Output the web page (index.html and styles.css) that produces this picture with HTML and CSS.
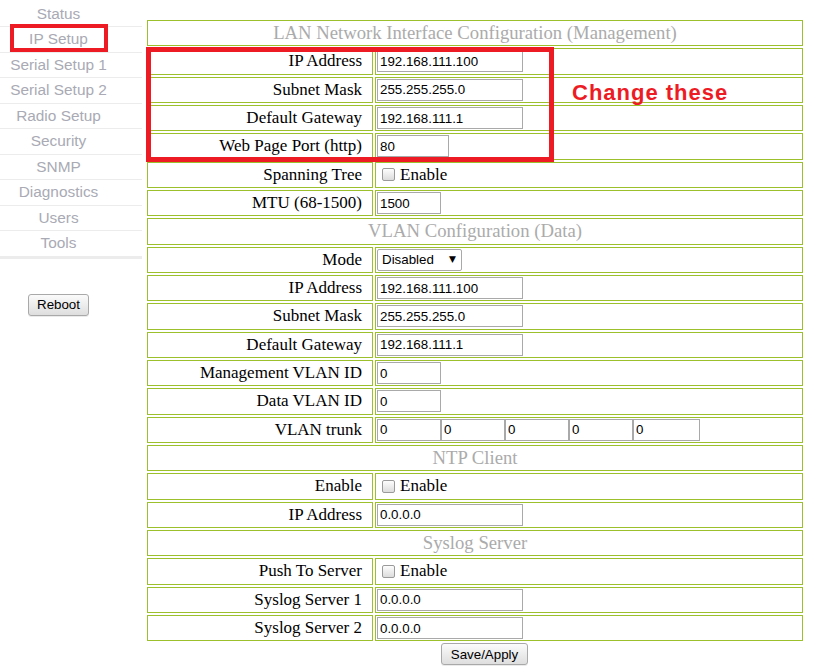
FILE: index.html
```html
<!DOCTYPE html>
<html>
<head>
<meta charset="utf-8">
<link rel="stylesheet" href="styles.css">
</head>
<body>
<div class="page">
  <aside class="sidebar">
    <ul class="nav">
      <li>Status</li>
      <li>IP Setup</li>
      <li>Serial Setup 1</li>
      <li>Serial Setup 2</li>
      <li>Radio Setup</li>
      <li>Security</li>
      <li>SNMP</li>
      <li>Diagnostics</li>
      <li>Users</li>
      <li class="last">Tools</li>
    </ul>
    <div class="reboot-wrap"><button class="btn">Reboot</button></div>
  </aside>
  <main class="main">
    <table class="cfg">
      <tr><td colspan="2" class="head">LAN Network Interface Configuration (Management)</td></tr>
      <tr><td class="lbl">IP Address</td><td class="val"><input class="txt w146" value="192.168.111.100"></td></tr>
      <tr><td class="lbl">Subnet Mask</td><td class="val"><input class="txt w146" value="255.255.255.0"></td></tr>
      <tr><td class="lbl">Default Gateway</td><td class="val"><input class="txt w146" value="192.168.111.1"></td></tr>
      <tr><td class="lbl">Web Page Port (http)</td><td class="val"><input class="txt w72" value="80"></td></tr>
      <tr><td class="lbl">Spanning Tree</td><td class="val"><label class="chk"><input type="checkbox" class="cb">Enable</label></td></tr>
      <tr><td class="lbl">MTU (68-1500)</td><td class="val"><input class="txt w64" value="1500"></td></tr>
      <tr><td colspan="2" class="head">VLAN Configuration (Data)</td></tr>
      <tr><td class="lbl">Mode</td><td class="val"><span class="sel"><select class="select"><option>Disabled</option></select></span></td></tr>
      <tr><td class="lbl">IP Address</td><td class="val"><input class="txt w146" value="192.168.111.100"></td></tr>
      <tr><td class="lbl">Subnet Mask</td><td class="val"><input class="txt w146" value="255.255.255.0"></td></tr>
      <tr><td class="lbl">Default Gateway</td><td class="val"><input class="txt w146" value="192.168.111.1"></td></tr>
      <tr><td class="lbl">Management VLAN ID</td><td class="val"><input class="txt w64" value="0"></td></tr>
      <tr><td class="lbl">Data VLAN ID</td><td class="val"><input class="txt w64" value="0"></td></tr>
      <tr><td class="lbl">VLAN trunk</td><td class="val"><div class="trunk"><input class="txt w64" value="0"><input class="txt w64" value="0"><input class="txt w64" value="0"><input class="txt w64" value="0"><input class="txt w67" value="0"></div></td></tr>
      <tr><td colspan="2" class="head">NTP Client</td></tr>
      <tr><td class="lbl">Enable</td><td class="val"><label class="chk"><input type="checkbox" class="cb">Enable</label></td></tr>
      <tr><td class="lbl">IP Address</td><td class="val"><input class="txt w146" value="0.0.0.0"></td></tr>
      <tr><td colspan="2" class="head">Syslog Server</td></tr>
      <tr><td class="lbl">Push To Server</td><td class="val"><label class="chk"><input type="checkbox" class="cb">Enable</label></td></tr>
      <tr><td class="lbl">Syslog Server 1</td><td class="val"><input class="txt w146" value="0.0.0.0"></td></tr>
      <tr><td class="lbl">Syslog Server 2</td><td class="val"><input class="txt w146" value="0.0.0.0"></td></tr>
    </table>
    <div class="save-row"><button class="btn save">Save/Apply</button></div>
  </main>
</div>
<div class="mark mark-nav"></div>
<div class="mark mark-fields"></div>
<div class="note">Change these</div>
</body>
</html>
```

FILE: styles.css
```css
html, body {
  margin: 0;
  padding: 0;
  background: #fff;
}
body {
  position: relative;
  width: 817px;
  height: 671px;
  overflow: hidden;
  font-family: "Liberation Serif", "Times New Roman", serif;
}
.page {
  display: flex;
  align-items: flex-start;
}
.sidebar {
  width: 142px;
  flex: none;
}
.nav {
  list-style: none;
  margin: 0;
  padding: 1.5px 0 0;
}
.nav li {
  font-family: "Liberation Sans", Arial, sans-serif;
  font-size: 15.4px;
  color: #a9aab4;
  line-height: 24.5px;
  height: 24.5px;
  border-bottom: 1px solid #ececec;
  text-align: center;
  padding-right: 25px;
}
.nav li.last {
  border-bottom: 3px solid #ececec;
}
.reboot-wrap {
  padding-top: 35px;
  padding-right: 25px;
  text-align: center;
}
.btn {
  font-family: "Liberation Sans", Arial, sans-serif;
  font-size: 13.33px;
  color: #000;
  height: 22px;
  padding: 0 7px;
  border: 1px solid #a9a9a9;
  border-radius: 3px;
  background: linear-gradient(#fbfbfb, #dedede);
  box-shadow: 0 1px 0 rgba(0,0,0,0.08);
}
.reboot-wrap .btn {
  width: 61px;
}
.main {
  margin-left: 3px;
  margin-top: 18px;
}
.cfg {
  border-collapse: separate;
  border-spacing: 2px;
  width: 660px;
}
.cfg td {
  border: 1px solid #9cbf2c;
  height: 24.33px;
  padding: 0;
  vertical-align: middle;
}
.cfg td.head {
  text-align: center;
  color: #ababab;
  font-size: 18.7px;
}
.cfg td.lbl {
  width: 214px;
  text-align: right;
  padding-right: 10px;
  font-size: 17px;
  color: #000;
  white-space: nowrap;
}
.cfg td.val {
  padding-left: 1px;
}
.txt {
  display: block;
  box-sizing: border-box;
  height: 22px;
  margin: 0;
  padding: 1px 2px;
  border: 1px solid #a9a9a9;
  font-family: "Liberation Sans", Arial, sans-serif;
  font-size: 13.33px;
  color: #000;
  background: #fff;
}
.w146 { width: 146px; }
.w72 { width: 72px; }
.w64 { width: 64px; }
.w67 { width: 67px; }
.trunk {
  display: flex;
}
.chk {
  display: flex;
  align-items: center;
  font-size: 17px;
  color: #000;
  padding-left: 5px;
}
.cb {
  appearance: none;
  -webkit-appearance: none;
  width: 13px;
  height: 13px;
  margin: 0 5px 0 0;
  border: 1px solid #9a9a9a;
  border-radius: 2px;
  background: linear-gradient(#fdfdfd, #dcdcdc);
}
.sel {
  position: relative;
  display: inline-block;
  vertical-align: middle;
}
.sel::after {
  content: "\25BC";
  position: absolute;
  right: 6px;
  top: 5px;
  font-size: 9px;
  font-family: "DejaVu Sans", sans-serif;
  color: #000;
  pointer-events: none;
}
.select {
  appearance: none;
  -webkit-appearance: none;
  display: block;
  width: 85px;
  height: 22px;
  margin: 0;
  padding: 0 0 0 4px;
  border: 1px solid #a9a9a9;
  border-radius: 2px;
  background: #fff;
  font-family: "Liberation Sans", Arial, sans-serif;
  font-size: 13.33px;
  color: #000;
}
.save-row {
  padding-left: 296px;
}
.save {
  width: 87px;
}
.mark {
  position: absolute;
  border: 4px solid #ed1c24;
  box-sizing: border-box;
}
.mark-nav {
  left: 10px;
  top: 24px;
  width: 98px;
  height: 28px;
}
.mark-fields {
  left: 146px;
  top: 47px;
  width: 408px;
  height: 115px;
  border-width: 5px;
}
.note {
  position: absolute;
  left: 572px;
  top: 80px;
  font-family: "Liberation Sans", Arial, sans-serif;
  font-weight: bold;
  font-size: 22px;
  letter-spacing: 1px;
  color: #ed1c24;
}
```
